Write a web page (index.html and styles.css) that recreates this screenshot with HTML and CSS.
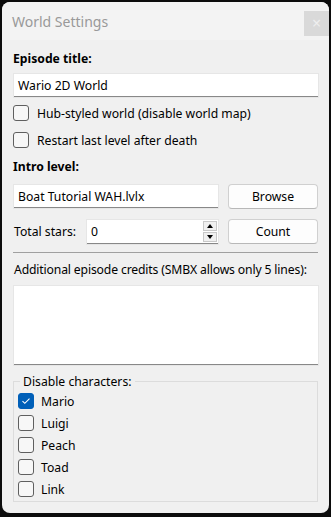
FILE: index.html
```html
<!DOCTYPE html>
<html lang="en">

<head>
    <meta charset="UTF-8">
    <meta name="viewport" content="width=device-width, initial-scale=1.0">
    <title>World Settings</title>
    <link rel="stylesheet" href="styles.css">
</head>

<body>

    <div class="window">
        <div class="titlebar">
            <span class="title">World Settings</span>
            <span class="close">&#215;</span>
        </div>

        <div class="content">
            <label class="heading">Episode title:</label>
            <div class="field field-wide">Wario 2D World</div>

            <label class="check"><span class="box"></span>Hub-styled world (disable world map)</label>
            <label class="check"><span class="box"></span>Restart last level after death</label>

            <label class="heading heading-intro">Intro level:</label>
            <div class="row row-intro">
                <div class="field field-file">Boat Tutorial WAH.lvlx</div>
                <button class="btn">Browse</button>
            </div>

            <div class="row row-stars">
                <span class="stars-label">Total stars:</span>
                <div class="field field-spin">
                    <span>0</span>
                    <span class="spin">
                        <span class="spin-up"></span>
                        <span class="spin-down"></span>
                    </span>
                </div>
                <button class="btn">Count</button>
            </div>

            <hr class="separator">

            <label class="credits-label">Additional episode credits (SMBX allows only 5 lines):</label>
            <div class="textarea"></div>

            <fieldset class="group">
                <legend>Disable characters:</legend>
                <label class="check check-group"><span class="box checked">
                    <svg width="10" height="8" viewBox="0 0 10 8"><path d="M1.5 4.2 L3.8 6.3 L8.5 1.6" fill="none" stroke="#fff" stroke-width="1.1"/></svg>
                </span>Mario</label>
                <label class="check check-group"><span class="box"></span>Luigi</label>
                <label class="check check-group"><span class="box"></span>Peach</label>
                <label class="check check-group"><span class="box"></span>Toad</label>
                <label class="check check-group"><span class="box"></span>Link</label>
            </fieldset>
        </div>
    </div>

</body>

</html>
```

FILE: styles.css
```css
body {
    margin: 0;
    padding: 0;
    background-color: #0c0c0c;
    font-family: 'Noto Sans', 'Open Sans', sans-serif;
    font-size: 12.2px;
    color: #000;
}

.window {
    margin: 2px 2px 0 2px;
    width: 327px;
    height: 511px;
    background-color: #f0f0f0;
    border-radius: 8px;
    overflow: hidden;
}

.titlebar {
    height: 38px;
    background-color: #f3f3f3;
    display: flex;
    align-items: center;
    justify-content: space-between;
}

.title {
    margin-left: 10px;
    margin-top: 1px;
    font-size: 14px;
    color: #999;
}

.close {
    width: 25px;
    height: 25px;
    background-color: #d9d9d9;
    color: #eee;
    font-size: 16px;
    line-height: 25px;
    text-align: center;
    align-self: flex-start;
    margin-top: 9px;
}

.content {
    padding: 11px 10px 0 11px;
}

.heading {
    display: block;
    font-weight: bold;
    line-height: 16px;
    margin-bottom: 7px;
}

.heading-intro {
    margin-top: 7px;
    margin-bottom: 9px;
}

.field {
    background-color: #fff;
    border-bottom: 1px solid #888;
    height: 22px;
    line-height: 22px;
    padding: 0 4px;
    box-sizing: border-box;
    box-shadow: 0 0 0 1px #e6e6e6;
}

.field-wide {
    margin-left: 1px;
    width: 304px;
    height: 23px;
    line-height: 23px;
    margin-bottom: 8px;
}

.check {
    display: flex;
    align-items: center;
    height: 16px;
    margin-bottom: 11px;
}

.box {
    width: 14px;
    height: 14px;
    border: 1px solid #5f5f5f;
    border-radius: 3px;
    margin-right: 8px;
    background-color: #f7f7f7;
    display: flex;
    align-items: center;
    justify-content: center;
}

.box.checked {
    background-color: #005fb8;
    border-color: #005fb8;
}

.row {
    display: flex;
    align-items: center;
}

.row-intro {
    margin-left: 1px;
    margin-bottom: 10px;
}

.field-file {
    width: 204px;
    height: 23px;
    line-height: 23px;
    margin-right: 10px;
}

.btn {
    width: 90px;
    height: 25px;
    background-color: #fdfdfd;
    border: 1px solid #d0d0d0;
    border-bottom-color: #b8b8b8;
    border-radius: 4px;
    font-family: inherit;
    font-size: 12.2px;
    color: #000;
    padding: 0;
}

.row-stars {
    margin-bottom: 8px;
}

.stars-label {
    width: 73px;
    margin-left: 1px;
}

.field-spin {
    width: 131px;
    height: 24px;
    line-height: 24px;
    margin-right: 10px;
    display: flex;
    justify-content: space-between;
    padding-right: 1px;
}

.spin {
    display: flex;
    flex-direction: column;
    justify-content: center;
    gap: 1px;
    margin-top: 1px;
}

.spin-up,
.spin-down {
    width: 14px;
    height: 10px;
    background-color: #f0f0f0;
    border: 1px solid #c8c8c8;
    box-sizing: border-box;
    position: relative;
}

.spin-up::after,
.spin-down::after {
    content: "";
    position: absolute;
    left: 3px;
    border-left: 3.5px solid transparent;
    border-right: 3.5px solid transparent;
}

.spin-up::after {
    top: 2px;
    border-bottom: 4px solid #000;
}

.spin-down::after {
    top: 2px;
    border-top: 4px solid #000;
}

.separator {
    border: none;
    border-top: 1px solid #a0a0a0;
    margin: 0;
    width: 305px;
}

.credits-label {
    display: block;
    white-space: nowrap;
    letter-spacing: -0.15px;
    margin-top: 9px;
    line-height: 16px;
    margin-left: 1px;
    margin-bottom: 8px;
}

.textarea {
    margin-left: 1px;
    width: 304px;
    height: 79px;
    background-color: #fff;
    border-bottom: 1px solid #888;
    box-sizing: border-box;
    box-shadow: 0 0 0 1px #e6e6e6;
}

.group {
    margin: 8px 0 0 0;
    width: 305px;
    height: 129px;
    box-sizing: border-box;
    border: 1px solid #dcdcdc;
    padding: 3px 0 0 4px;
}

.group legend {
    padding: 0 3px;
    margin-left: 2px;
}

.check-group {
    margin-bottom: 6px;
}

.check-group .box {
    margin-right: 7px;
}
```
